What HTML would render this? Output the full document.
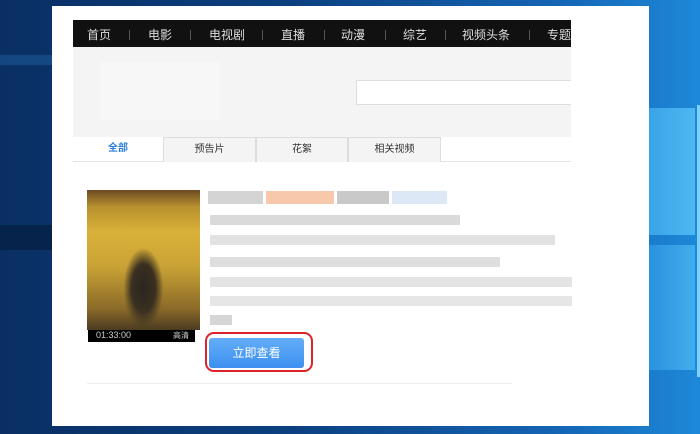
<!DOCTYPE html>
<html><head><meta charset="utf-8"><style>
*{margin:0;padding:0;box-sizing:border-box}
body{width:700px;height:434px;overflow:hidden;position:relative;font-family:"Liberation Sans","Noto Sans CJK SC",sans-serif;background:linear-gradient(90deg,#0a2f63 0%,#0b3f7e 40%,#1565b5 80%,#1e88d8 100%)}
.abs{position:absolute}
.panel{left:52px;top:6px;width:597px;height:420px;background:#fff}
.nav{left:73px;top:20px;width:498px;height:27px;background:#111;color:#ddd;font-size:12px;white-space:nowrap;overflow:hidden}
.nav span{position:absolute;top:6px}
.nav i{position:absolute;top:10px;width:1px;height:10px;background:#555}
.hdr{left:73px;top:47px;width:498px;height:90px;background:#f4f4f4}
.search{left:356px;top:80px;width:215px;height:25px;background:#fff;border:1px solid #ddd;border-right:none}
.tabs{left:73px;top:137px;width:498px;height:25px;border-bottom:1px solid #e4e4e4;background:#fff}
.tab{position:absolute;top:0;height:25px;border:1px solid #ddd;border-bottom:none;background:#f4f4f4;font-size:10px;color:#333;text-align:center;line-height:24px}
.blk{position:absolute;height:10px}
</style></head><body>
<div class="abs" style="left:0;top:225px;width:52px;height:25px;background:#06244b"></div>
<div class="abs" style="left:0;top:55px;width:52px;height:10px;background:#1e5fa0;opacity:.5"></div>
<div class="abs" style="left:649px;top:108px;width:46px;height:127px;background:linear-gradient(90deg,#3aa3e8,#4db8f2)"></div>
<div class="abs" style="left:649px;top:245px;width:46px;height:125px;background:linear-gradient(90deg,#2a92de,#42adee)"></div>
<div class="abs" style="left:697px;top:105px;width:3px;height:272px;background:#7fd0ff"></div>
<div class="abs panel"></div>
<div class="abs nav">
<span style="left:14px">首页</span><i style="left:56px"></i>
<span style="left:75px">电影</span><i style="left:117px"></i>
<span style="left:136px">电视剧</span><i style="left:189px"></i>
<span style="left:208px">直播</span><i style="left:251px"></i>
<span style="left:268px">动漫</span><i style="left:312px"></i>
<span style="left:330px">综艺</span><i style="left:372px"></i>
<span style="left:389px">视频头条</span><i style="left:456px"></i>
<span style="left:474px">专题</span>
</div>
<div class="abs hdr"></div>
<div class="abs" style="left:100px;top:62px;width:120px;height:58px;background:#f7f7f7"></div>
<div class="abs search"></div>
<div class="abs tabs">
<div style="position:absolute;left:0;top:0;width:90px;height:25px;font-size:10px;color:#2a7fd8;text-align:center;line-height:24px;font-weight:bold">全部</div>
<div class="tab" style="left:90px;width:93px">预告片</div>
<div class="tab" style="left:183px;width:92px">花絮</div>
<div class="tab" style="left:275px;width:93px">相关视频</div>
</div>
<div class="abs" style="left:87px;top:190px;width:113px;height:140px;background:
radial-gradient(ellipse 20px 40px at 50% 70%,#2a2520 0%,#3a3020 60%,transparent 100%),
linear-gradient(180deg,#6b4a22 0%,#b8902e 12%,#d9b23a 30%,#c9a235 55%,#8a6a28 85%,#4a3a22 100%)"></div>
<div class="abs" style="left:88px;top:330px;width:107px;height:12px;background:#000;color:#ccc;font-size:9px;line-height:11px;padding-left:8px">01:33:00<span style="float:right;margin-right:6px;font-size:8px">高清</span></div>
<div class="blk" style="left:208px;top:191px;width:55px;height:13px;background:#d4d4d4"></div>
<div class="blk" style="left:266px;top:191px;width:68px;height:13px;background:#f8c8aa"></div>
<div class="blk" style="left:337px;top:191px;width:52px;height:13px;background:#c9c9c9"></div>
<div class="blk" style="left:392px;top:191px;width:55px;height:13px;background:#dde8f6"></div>
<div class="blk" style="left:210px;top:215px;width:250px;background:#dadada"></div>
<div class="blk" style="left:210px;top:235px;width:345px;background:#e2e2e2"></div>
<div class="blk" style="left:210px;top:257px;width:290px;background:#dedede"></div>
<div class="blk" style="left:210px;top:277px;width:362px;background:#e4e4e4"></div>
<div class="blk" style="left:210px;top:296px;width:362px;background:#e6e6e6"></div>
<div class="blk" style="left:210px;top:315px;width:22px;background:#d6d6d6"></div>
<div class="abs" style="left:205px;top:332px;width:108px;height:40px;border:2px solid #d9252a;border-radius:9px"></div>
<div class="abs" style="left:209px;top:338px;width:95px;height:30px;background:linear-gradient(180deg,#64aef8,#3d8ff0);border-radius:3px;color:#fff;font-size:12px;text-align:center;line-height:30px">立即查看</div>
<div class="abs" style="left:87px;top:383px;width:425px;height:1px;background:#eee"></div>
</body></html>
